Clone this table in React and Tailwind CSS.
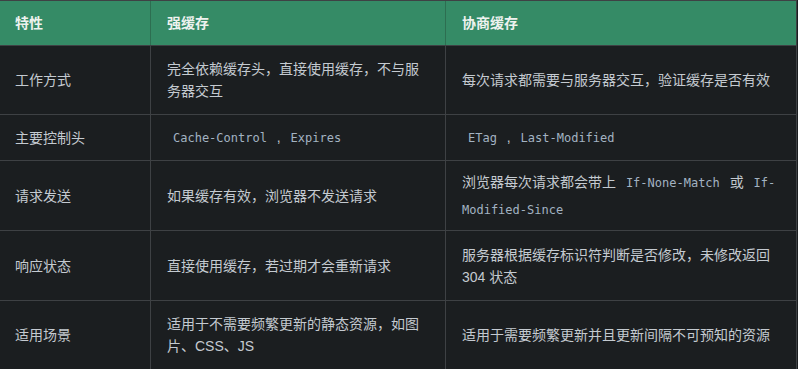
const rows = [
  {
    h: "h-[68px]",
    name: "工作方式",
    strong: <>完全依赖缓存头，直接使用缓存，不与服务器交互</>,
    nego: <>每次请求都需要与服务器交互，验证缓存是否有效</>,
  },
  {
    h: "h-[45px]",
    name: "主要控制头",
    strong: (
      <>
        <Code>Cache-Control</Code> , <Code>Expires</Code>
      </>
    ),
    nego: (
      <>
        <Code>ETag</Code> , <Code>Last-Modified</Code>
      </>
    ),
  },
  {
    h: "h-[69px]",
    name: "请求发送",
    strong: <>如果缓存有效，浏览器不发送请求</>,
    negoLead: "leading-[26px]",
    nego: (
      <>
        浏览器每次请求都会带上 <Code>If-None-Match</Code> 或{" "}
        <Code>If-Modified-Since</Code>
      </>
    ),
  },
  {
    h: "h-[69px]",
    name: "响应状态",
    strong: <>直接使用缓存，若过期才会重新请求</>,
    nego: <>服务器根据缓存标识符判断是否修改，未修改返回 304 状态</>,
  },
  {
    h: "h-[68px]",
    name: "适用场景",
    strong: <>适用于不需要频繁更新的静态资源，如图片、CSS、JS</>,
    nego: <>适用于需要频繁更新并且更新间隔不可预知的资源</>,
  },
];

function Code({ children }) {
  return (
    <code className="px-1.5 font-['DejaVu_Sans_Mono',monospace] text-[12px] text-[#a3b3c2]">
      {children}
    </code>
  );
}

export default function App() {
  return (
    <div className="min-h-[369px] w-full overflow-hidden bg-[#1b1e20] font-['Liberation_Sans','Noto_Sans_CJK_SC',sans-serif]">
      <div className="w-[797px] border-t border-r border-[#3e4144] text-[14px] leading-[22px]">
        <div className="grid h-[45px] grid-cols-[151px_295px_350px] border-b border-[#3e4144] bg-[#358b66] font-bold text-[#eef2ef]">
          <div className="flex items-center border-r border-[#2d6e51] pl-[15px]">特性</div>
          <div className="flex items-center border-r border-[#2d6e51] px-4">强缓存</div>
          <div className="flex items-center px-4">协商缓存</div>
        </div>
        {rows.map((r) => (
          <div
            key={r.name}
            className={`grid grid-cols-[151px_295px_350px] border-b border-[#3e4144] text-[#c4cad0] ${r.h} box-content`}
          >
            <div className="flex items-center border-r border-[#3e4144] pl-[15px]">{r.name}</div>
            <div className="flex items-center border-r border-[#3e4144] px-4">
              <div>{r.strong}</div>
            </div>
            <div className="flex items-center px-4">
              <div className={r.negoLead}>{r.nego}</div>
            </div>
          </div>
        ))}
      </div>
    </div>
  );
}
